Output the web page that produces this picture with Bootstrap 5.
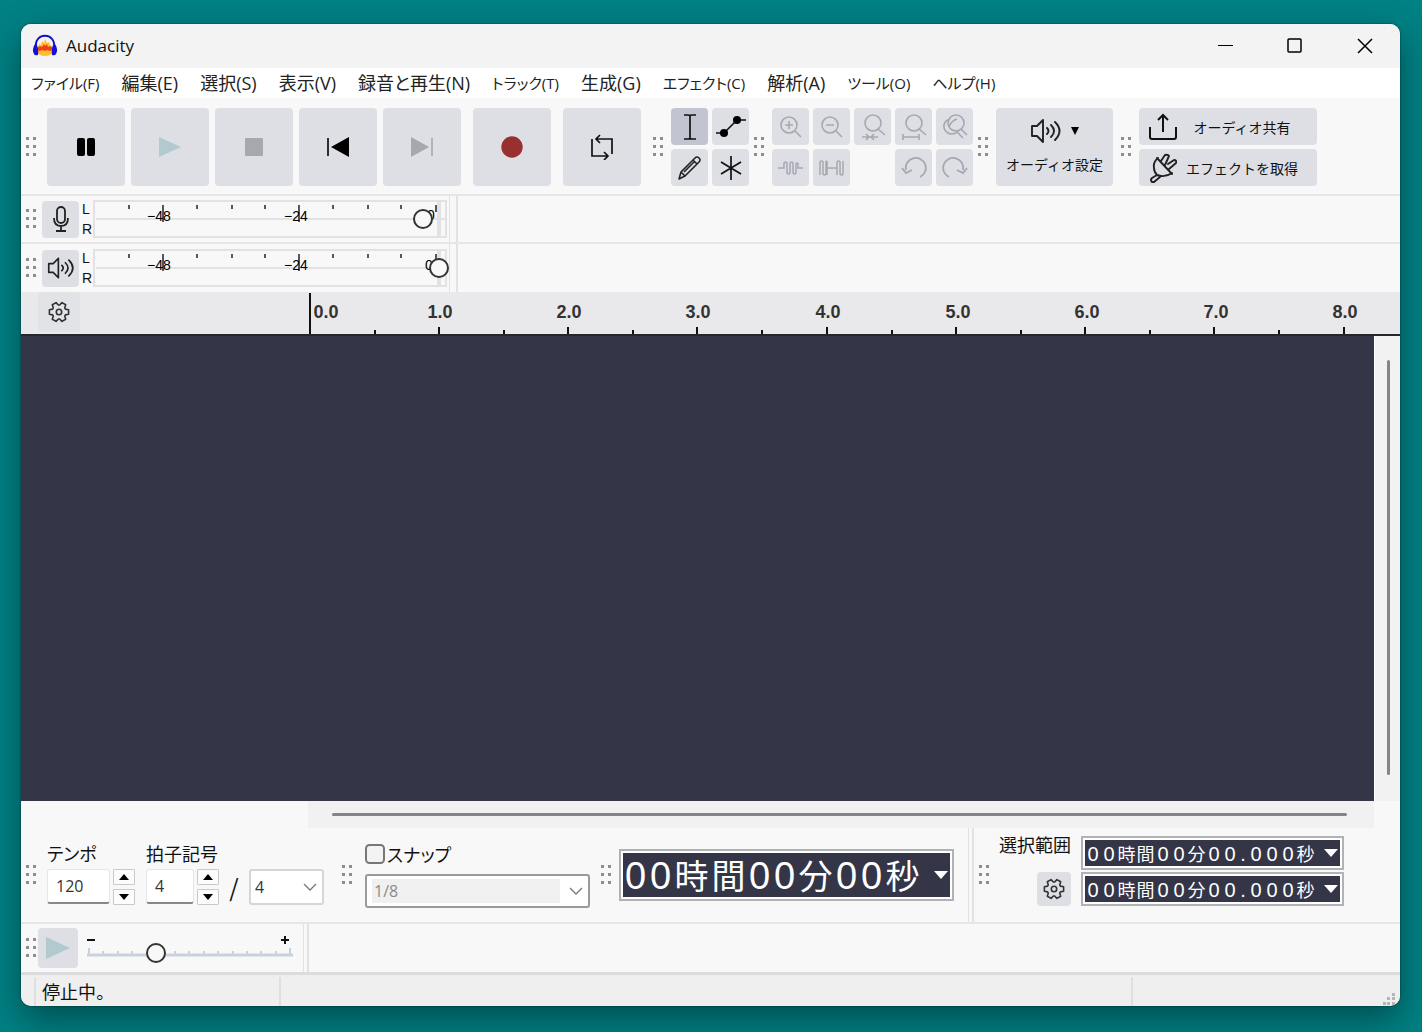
<!DOCTYPE html>
<html lang="ja">
<head>
<meta charset="utf-8">
<meta name="viewport" content="width=device-width, initial-scale=1">
<title>Audacity</title>
<link rel="stylesheet" href="https://cdn.jsdelivr.net/npm/bootstrap@5.3.0/dist/css/bootstrap.min.css">
<script src="https://cdn.jsdelivr.net/npm/bootstrap@5.3.0/dist/js/bootstrap.bundle.min.js"></script>
<style>
  body {
    min-height: 100vh;
    padding: 24px 22px 26px 21px;
    background: #008184;
    color: #111;
    font-family: "Noto Sans CJK JP", sans-serif;
    font-size: 18px;
    line-height: 24px;
    font-feature-settings: "palt";
  }
  svg { display: block; flex-shrink: 0; }
  .app-window { background: #f8f8f8; border-radius: 10px; box-shadow: 0 14px 36px rgba(0, 0, 0, .4), 0 0 2px rgba(0, 0, 0, .6); }
  .title-bar { background: #f3f3f3; min-height: 44px; padding-left: 11px; }
  .title-text { font: 17px/24px "Open Sans", sans-serif; margin-left: 8px; }
  .caption-btn { width: 70px; height: 44px; border: 0; border-radius: 0; padding: 0; }
  .menu-strip { background: #fff; min-height: 30px; padding-left: 10px; gap: 22px; }
  .menu-strip a { color: #222; text-decoration: none; white-space: nowrap; font-family: "Open Sans", "Noto Sans CJK JP", sans-serif; font-size: 18px; }
  .menu-strip a.kana-item { font-size: 15px; }
  .strip { border-bottom: 2px solid #e6e6e8; }
  .main-tools { padding: 10px 0 8px; }
  .grip { margin: 0 6px 0 5px; }
  .tool-btn { background: #dedfe4; border: 0; border-radius: 4px; padding: 0; width: 37px; height: 37px; color: #111; display: flex; align-items: center; justify-content: center; }
  .tool-btn:hover, .tool-btn:disabled { background: #dedfe4; opacity: 1; }
  .tool-btn:disabled { color: #a5a8b2; border: 0; }
  .tool-btn.chosen { background: #c2c5d1; }
  .big-btn { width: 78px; height: 78px; }
  .record-btn { margin: 0 6px; }
  .transport { gap: 6px; padding: 0 7px 0 3px; }
  .tool-grid { display: grid; gap: 4px; grid-template-columns: repeat(2, 37px); }
  .zoom-grid { grid-template-columns: repeat(5, 37px); }
  .setup-btn { width: 117px; height: 78px; flex-direction: column; gap: 8px; font-size: 14px; line-height: 24px; white-space: nowrap; }
  .share-btn { width: 178px; padding: 0 10px; font-size: 14px; line-height: 24px; white-space: nowrap; }
  .dock { border-right: 2px solid #e2e2e5; }
  .dock::after { content: ""; align-self: stretch; width: 1px; background: #e2e2e5; margin-right: 3px; }
  .meter-row { min-height: 48px; }
  .meter-dock { width: 437px; }
  .chan { font: 14px/20px "Liberation Sans", sans-serif; width: 14px; padding-left: 3px; }
  .meter { position: relative; width: 356px; height: 38px; }
  .meter text { font: 14px "Liberation Sans", sans-serif; }
  .knob { -webkit-appearance: none; appearance: none; background: transparent; margin: 0; height: 22px; }
  .knob::-webkit-slider-runnable-track { background: transparent; height: 22px; }
  .knob::-webkit-slider-thumb { -webkit-appearance: none; width: 20px; height: 20px; margin-top: 1px; border: 2px solid #333; border-radius: 50%; background: #f8f8f8; }
  .meter .knob { position: absolute; left: 0; top: 8px; width: 100%; }
  .timeline { background: #e9e9eb; border-bottom: 2px solid #26262f; min-height: 44px; }
  .timeline-gear { width: 42px; height: 40px; margin-left: 17px; background: #e2e3e7; align-self: flex-start; }
  .ruler { margin-left: 229px; height: 42px; overflow: hidden; flex: 1 1 0; min-width: 0; }
  .ruler text { font: bold 18px "Liberation Sans", sans-serif; fill: #333; text-anchor: middle; }
  .track-area { background: #343547; }
  .v-track { width: 26px; background: #f2f2f3; padding: 24px 11px 26px 12px; border-left: 1px solid #fff; }
  .h-track { height: 27px; margin: 0 26px 0 287px; background: #f1f1f2; padding: 12px 27px 0 24px; }
  .scroll-thumb { background: #858585; border-radius: 2px; }
  .v-track .scroll-thumb { height: 100%; width: 3px; }
  .h-track .scroll-thumb { height: 3px; }
  .bottom-strip { min-height: 96px; }
  .tempo-group { gap: 11px; padding: 0 18px 4px 3px; }
  .field-row { display: flex; gap: 3px; }
  .num-box { height: 35px; border: 1px solid #e6e6e6; border-bottom: 2px solid #888; border-radius: 3px; padding: 0 8px; font: 16px/24px "Open Sans", sans-serif; color: #333; background: #fff; width: 63px; }
  .beat-box { width: 48px; }
  .slash { width: 24px; text-align: center; font-size: 24px; line-height: 36px; }
  .spin-btn { width: 22px; height: 16px; background: #fcfcfc; border: 1px solid #c9c9c9; border-radius: 1px; padding: 0; display: flex; align-items: center; justify-content: center; }
  .pick { --bs-form-select-bg-img: url("data:image/svg+xml,%3csvg xmlns='http://www.w3.org/2000/svg' viewBox='0 0 14 14'%3e%3cpath fill='none' stroke='%23777' stroke-width='1.3' d='M1 4l6 6 6-6'/%3e%3c/svg%3e"); width: 75px; height: 36px; border: 2px solid #d6d6d8; border-radius: 3px; padding: 0 24px 0 4px; font: 16px/24px "Open Sans", sans-serif; color: #333; background-color: #fff; background-position: right 5px center; background-size: 14px 14px; }
  .snap-group { padding: 0 6px 0 5px; }
  .snap-pick { width: 225px; height: 34px; border-color: #9a9a9a; padding-left: 7px; }
  .snap-pick:disabled { color: #8b8b8b; background-color: #fff; background-image: var(--bs-form-select-bg-img), linear-gradient(#f0f0f0, #f0f0f0); background-position: right 5px center, 5px center; background-size: 14px 14px, 188px 24px; background-repeat: no-repeat; }
  .snap-check { width: 20px; height: 20px; margin: 0 2px 0 0; border: 2px solid #777; border-radius: 4px; background-color: #f3f3f3; }
  .time-box { background: #343547; border: 2px solid #b0b3b6; outline: 2px solid #fff; outline-offset: -4px; color: #fff; padding: 2px 4px 2px 2px; white-space: nowrap; }
  .time-box span { display: inline-block; text-align: center; }
  .time-box button { background: none; border: 0; padding: 0; }
  .time-big { width: 335px; height: 52px; font-size: 34px; line-height: 48px; font-feature-settings: normal; margin-right: 14px; }
  .time-big .dg { width: 25px; font: 38px/48px "Liberation Sans", sans-serif; }
  .time-big .kj { width: 37px; }
  .time-small { width: 263px; height: 34px; font-size: 18px; line-height: 30px; font-feature-settings: normal; }
  .time-small .dg { width: 16px; font: 20px/30px "Liberation Sans", sans-serif; }
  .time-small .kj { width: 19px; }
  .time-small .pt { width: 10px; font: 20px/30px "Liberation Sans", sans-serif; }
  .range-group { gap: 10px; padding-bottom: 8px; }
  .range-label { line-height: 16px; }
  .range-gear { width: 34px; height: 34px; }
  .range-boxes { row-gap: 2px; }
  .speed-strip { min-height: 48px; border-bottom: 0; }
  .speed-btn { width: 40px; height: 40px; }
  .speed { position: relative; width: 208px; height: 40px; margin: 0 9px 0 8px; }
  .speed .knob { position: absolute; left: 0; top: 14px; width: 100%; }
  .status-strip { background: #efefef; border-top: 3px solid #dcdcde; border-radius: 0 0 10px 10px; }
  .status-cell { border-right: 2px solid #dfdfe0; line-height: 29px; margin-top: 2px; width: 15px; }
  .status-main { width: 245px; padding-left: 6px; }
  .status-end { width: 267px; }
</style>
</head>
<body class="d-flex flex-column">

<svg width="0" height="0" class="position-absolute" aria-hidden="true">
  <symbol id="grip" viewBox="0 0 12 20"><g fill="#8d8d92"><rect width="3" height="3"/><rect x="7" width="3" height="3"/><rect y="8" width="3" height="3"/><rect x="7" y="8" width="3" height="3"/><rect y="16" width="3" height="3"/><rect x="7" y="16" width="3" height="3"/></g></symbol>
  <symbol id="gear" viewBox="-11 -11 22 22"><path d="M6.4 2.9L9.6 2.2V-2.2L6.4-2.9L5.7-4.1L6.7-7.2L2.9-9.4L.7-7H-.7L-2.9-9.4L-6.7-7.2L-5.7-4.1L-6.4-2.9L-9.6-2.2V2.2L-6.4 2.9L-5.7 4.1L-6.7 7.2L-2.9 9.4L-.7 7H.7L2.9 9.4L6.7 7.2L5.7 4.1Z" fill="none" stroke="#333" stroke-width="1.6" stroke-linejoin="round"/><circle r="2.7" fill="none" stroke="#333" stroke-width="1.6"/></symbol>
  <symbol id="speaker" viewBox="0 0 32 26"><g fill="none" stroke="#222" stroke-width="1.9"><path d="M2 8h5l6-6v22l-6-6H2z" stroke-linejoin="round"/><path d="M17 10q3 3 0 6M21 7q6 6 0 12M25 4q9 9 0 18" stroke-linecap="round"/></g></symbol>
  <symbol id="meter-scale" viewBox="0 0 356 38"><g fill="none" stroke="#e2e2e5" stroke-width="2"><path d="M1 1H345V37H1zM347 1H353V37H347zM3 19H344M347 19H353"/></g><g stroke="#222" stroke-width="1.5"><path d="M36 5v4M70 5v17M104 5v4M139 5v4M172 5v4M206 5v17M240 5v4M275 5v4M308 5v4M343 5v7"/></g></symbol>
</svg>

<div class="app-window d-flex flex-column flex-grow-1 overflow-hidden">
  <header class="title-bar d-flex align-items-center">
    <svg width="26" height="24" viewBox="0 0 26 24" aria-hidden="true">
      <path d="M5 17l2-7 2 1 1-4 2 2 1-4 2 4 2-1 1 3 2 1 1 5q-1 5-8 5t-8-5z" fill="#ffc02e"/>
      <path d="M5 14l3-2 2 1 2-3 1 2 2-2 1 3 2-1 3 2v2l-3 1-3-1-2 1-3-1-2 1-3-1z" fill="#f0401a"/>
      <path d="M4 13C2 -2 24 -2 22 13" fill="none" stroke="#1410c8" stroke-width="2"/>
      <path d="M4 9q3 5 2 12q-3 1-4-1q-3-6 2-11zM22 9q-3 5-2 12q3 1 4-1q3-6-2-11z" fill="#1410d8"/>
    </svg>
    <span class="title-text">Audacity</span>
    <div class="d-flex ms-auto">
      <button class="btn caption-btn" aria-label="最小化"><svg class="mx-auto" width="16" height="16"><path d="M1 7.5h15" stroke="#000" stroke-width="1.2"/></svg></button>
      <button class="btn caption-btn" aria-label="最大化"><svg class="mx-auto" width="16" height="16"><rect x="1" y="1" width="13" height="13" rx="1" fill="none" stroke="#000" stroke-width="1.5"/></svg></button>
      <button class="btn caption-btn" aria-label="閉じる"><svg class="mx-auto" width="16" height="16"><path d="M1 1l14 14M15 1L1 15" stroke="#000" stroke-width="1.5"/></svg></button>
    </div>
  </header>

  <nav class="menu-strip d-flex align-items-center">
    <a href="#" class="kana-item">ファイル(F)</a>
    <a href="#">編集(E)</a>
    <a href="#">選択(S)</a>
    <a href="#">表示(V)</a>
    <a href="#">録音と再生(N)</a>
    <a href="#" class="kana-item">トラック(T)</a>
    <a href="#">生成(G)</a>
    <a href="#" class="kana-item">エフェクト(C)</a>
    <a href="#">解析(A)</a>
    <a href="#" class="kana-item">ツール(O)</a>
    <a href="#" class="kana-item">ヘルプ(H)</a>
  </nav>

  <div class="strip main-tools d-flex align-items-center">
    <svg class="grip" width="12" height="20"><use href="#grip"/></svg>
    <div class="transport d-flex">
      <button class="btn tool-btn big-btn" aria-label="一時停止"><svg width="20" height="20"><path d="M3 1h4q2 0 2 2v14q0 2-2 2H3q-2 0-2-2V3q0-2 2-2zM13 1h4q2 0 2 2v14q0 2-2 2h-4q-2 0-2-2V3q0-2 2-2z"/></svg></button>
      <button class="btn tool-btn big-btn" disabled aria-label="再生"><svg width="22" height="20"><path d="M0 0l22 10L0 20z" fill="#b3c9d0"/></svg></button>
      <button class="btn tool-btn big-btn" disabled aria-label="停止"><svg width="18" height="18"><rect width="18" height="18" rx="1" fill="#a6a8ae"/></svg></button>
      <button class="btn tool-btn big-btn" aria-label="先頭へ"><svg width="22" height="20"><path d="M1 1v18" stroke="#000" stroke-width="1.6"/><path d="M22 0v20L4 10z"/></svg></button>
      <button class="btn tool-btn big-btn" disabled aria-label="末尾へ"><svg width="22" height="20"><path d="M21 1v18" stroke="#a6a8ae" stroke-width="1.6"/><path d="M0 0v20l18-10z" fill="#a6a8ae"/></svg></button>
      <button class="btn tool-btn big-btn record-btn" aria-label="録音"><svg width="22" height="22"><circle cx="11" cy="11" r="10.7" fill="#98302f"/></svg></button>
      <button class="btn tool-btn big-btn" aria-label="ループ"><svg width="24" height="26" viewBox="0 0 24 26"><g fill="none" stroke="#111" stroke-width="1.7"><path d="M2 5v17h15M22 20V5H7M10 1L6 5l4 4M14 18l4 4-4 4"/></g></svg></button>
    </div>
    <svg class="grip" width="12" height="20"><use href="#grip"/></svg>
    <div class="tool-grid">
      <button class="btn tool-btn chosen" aria-label="選択ツール"><svg width="14" height="26"><path d="M1 1h4q2 0 2 1q0-1 2-1h4M7 2v22M1 25h4q2 0 2-1q0 1 2 1h4" fill="none" stroke="#111" stroke-width="1.7"/></svg></button>
      <button class="btn tool-btn" aria-label="エンベロープツール"><svg width="30" height="24"><path d="M0 18h8L21 5h9" fill="none" stroke="#111" stroke-width="1.6"/><circle cx="8" cy="18" r="4"/><circle cx="21" cy="5" r="4"/></svg></button>
      <button class="btn tool-btn" aria-label="描画ツール"><svg width="26" height="26"><g fill="none" stroke="#222" stroke-width="1.6" stroke-linejoin="round"><path d="M2 24l2-7L18 3q2-2 4 0t0 4L8 21zM4 17l4 4M16 5l4 4M7 17L17 7"/></g></svg></button>
      <button class="btn tool-btn" aria-label="マルチツール"><svg width="24" height="26"><path d="M12 1v24M2 7l20 12M22 7L2 19" stroke="#111" stroke-width="1.7"/></svg></button>
    </div>
    <svg class="grip" width="12" height="20"><use href="#grip"/></svg>
    <div class="tool-grid zoom-grid">
      <button class="btn tool-btn" disabled aria-label="拡大"><svg width="24" height="24" fill="none" stroke="currentColor" stroke-width="1.6"><circle cx="10" cy="10" r="8"/><path d="M16 16l6 6M6 10h8M10 6v8"/></svg></button>
      <button class="btn tool-btn" disabled aria-label="縮小"><svg width="24" height="24" fill="none" stroke="currentColor" stroke-width="1.6"><circle cx="10" cy="10" r="8"/><path d="M16 16l6 6M6 10h8"/></svg></button>
      <button class="btn tool-btn" disabled aria-label="選択範囲に合わせる"><svg width="26" height="28" fill="none" stroke="currentColor" stroke-width="1.6"><circle cx="13" cy="10" r="8"/><path d="M18 16l7 6M2 24h16M6 21l3 3-3 3M14 21l-3 3 3 3"/></svg></button>
      <button class="btn tool-btn" disabled aria-label="プロジェクトに合わせる"><svg width="26" height="28" fill="none" stroke="currentColor" stroke-width="1.6"><circle cx="13" cy="10" r="8"/><path d="M18 16l7 6M2 24h16M2 21v6M18 21v6"/></svg></button>
      <button class="btn tool-btn" disabled aria-label="ズーム切り替え"><svg width="26" height="28" fill="none" stroke="currentColor" stroke-width="1.6"><circle cx="14" cy="10" r="8"/><path d="M19 16l6 6M8 6q-7 2-6 9q2 6 8 6q3 0 5-2l6 6M7 14q2-6 8-8"/></svg></button>
      <button class="btn tool-btn" disabled aria-label="トリム"><svg width="26" height="20" fill="none" stroke="currentColor" stroke-width="1.5"><path d="M0 10h6V6q0-2 1.500-2T9 6v8q0 2 1.500 2T12 14V6q0-2 1.500-2T15 6v8q0 2 1.500 2T18 14V6q0-1 1-1t1 1v4h5"/></svg></button>
      <button class="btn tool-btn" disabled aria-label="無音化"><svg width="26" height="20" fill="none" stroke="currentColor" stroke-width="1.5"><path d="M1 17V4q0-1 1.500-1T4 4v11q0 2 1.500 2T7 15V4q0-1 1-1M8 3v14M8 10h10M18 17V4q0-1 1.500-1T21 4v11q0 2 1.500 2T24 15V3"/></svg></button>
      <span></span>
      <button class="btn tool-btn" disabled aria-label="元に戻す"><svg width="26" height="24" fill="none" stroke="currentColor" stroke-width="1.8"><path d="M5 14a10 10 0 1 1 14 7M1 12l4 5 6-3"/></svg></button>
      <button class="btn tool-btn" disabled aria-label="やり直す"><svg width="26" height="24" fill="none" stroke="currentColor" stroke-width="1.8"><path d="M21 14a10 10 0 1 0-14 7M25 12l-4 5-6-3"/></svg></button>
    </div>
    <svg class="grip" width="12" height="20"><use href="#grip"/></svg>
    <button class="btn tool-btn setup-btn">
      <span class="d-flex align-items-center gap-2"><svg width="32" height="26"><use href="#speaker"/></svg><svg width="10" height="8"><path d="M1 0h8L5 8z"/></svg></span>
      <span>オーディオ設定</span>
    </button>
    <svg class="grip ms-2" width="12" height="20"><use href="#grip"/></svg>
    <div class="d-grid gap-1">
      <button class="btn tool-btn share-btn"><svg width="28" height="28"><path d="M1 14v10q0 2 2 2h22q2 0 2-2V14M14 19V3M9 7l5-5 5 5" fill="none" stroke="#111" stroke-width="2"/></svg><span class="flex-grow-1">オーディオ共有</span></button>
      <button class="btn tool-btn share-btn"><svg width="28" height="30"><path d="M9 5q-5 4-4 10q0 4 3 7M8 5l15 16M23 20q-7 5-15 2l-5 3q-2 2 0 4l2 0 6-5M12 8l4-6q3-1 4 1l-4 9M20 16l7-6q1-3-2-3l-6 4" fill="none" stroke="#222" stroke-width="1.9" stroke-linejoin="round" stroke-linecap="round"/></svg><span class="flex-grow-1">エフェクトを取得</span></button>
    </div>
  </div>

  <div class="strip meter-row d-flex align-items-stretch">
    <div class="dock meter-dock d-flex align-items-center">
      <svg class="grip me-0" width="12" height="20"><use href="#grip"/></svg>
      <button class="btn tool-btn ms-1" aria-label="録音メーター"><svg width="18" height="26"><g fill="none" stroke="#222" stroke-width="1.8"><rect x="5" y="1" width="8" height="16" rx="4"/><path d="M2 12q0 8 7 8t7-8M9 20v5M4 25h10"/></g></svg></button>
      <div class="chan">L<br>R</div>
      <div class="meter">
        <svg width="356" height="38"><use href="#meter-scale"/><text x="54" y="21">−48</text><text x="191" y="21">−24</text><text x="334" y="20">0</text></svg>
        <input type="range" class="knob" min="0" max="336" value="320" aria-label="録音音量">
      </div>
    </div>
  </div>
  <div class="meter-row d-flex align-items-stretch">
    <div class="dock meter-dock d-flex align-items-center">
      <svg class="grip me-0" width="12" height="20"><use href="#grip"/></svg>
      <button class="btn tool-btn ms-1" aria-label="再生メーター"><svg width="28" height="24"><use href="#speaker"/></svg></button>
      <div class="chan">L<br>R</div>
      <div class="meter">
        <svg width="356" height="38"><use href="#meter-scale"/><text x="54" y="21">−48</text><text x="191" y="21">−24</text><text x="332" y="21">0</text></svg>
        <input type="range" class="knob" min="0" max="336" value="336" aria-label="再生音量">
      </div>
    </div>
  </div>

  <div class="timeline d-flex">
    <button class="btn tool-btn timeline-gear" aria-label="タイムライン設定"><svg width="22" height="22"><use href="#gear"/></svg></button>
    <svg class="ruler" height="42">
      <path d="M1 1v41M130 35v7M259 35v7M388 35v7M518 35v7M647 35v7M776 35v7M905 35v7M1035 35v7M66 38v4M195 38v4M324 38v4M453 38v4M583 38v4M712 38v4M841 38v4M970 38v4" stroke="#111" stroke-width="2"/>
      <text x="17" y="26">0.0</text><text x="131" y="26">1.0</text><text x="260" y="26">2.0</text><text x="389" y="26">3.0</text><text x="519" y="26">4.0</text><text x="649" y="26">5.0</text><text x="778" y="26">6.0</text><text x="907" y="26">7.0</text><text x="1036" y="26">8.0</text>
    </svg>
  </div>

  <main class="d-flex flex-grow-1">
    <div class="track-area flex-grow-1"></div>
    <div class="v-track"><div class="scroll-thumb"></div></div>
  </main>
  <div class="h-track"><div class="scroll-thumb"></div></div>

  <div class="strip bottom-strip d-flex align-items-stretch">
    <div class="d-flex align-items-center">
      <svg class="grip" width="12" height="20"><use href="#grip"/></svg>
      <div class="tempo-group d-flex align-items-end">
        <div>
          <label for="tempo" class="d-block mb-1">テンポ</label>
          <div class="field-row">
            <input id="tempo" class="num-box" type="text" value="120">
            <div class="d-flex flex-column gap-1">
              <button class="spin-btn" aria-label="増やす"><svg width="10" height="6"><path d="M0 6l5-6 5 6z"/></svg></button>
              <button class="spin-btn" aria-label="減らす"><svg width="10" height="6"><path d="M0 0l5 6 5-6z"/></svg></button>
            </div>
          </div>
        </div>
        <div>
          <label for="beats" class="d-block mb-1">拍子記号</label>
          <div class="field-row">
            <input id="beats" class="num-box beat-box" type="text" value="4">
            <div class="d-flex flex-column gap-1">
              <button class="spin-btn" aria-label="増やす"><svg width="10" height="6"><path d="M0 6l5-6 5 6z"/></svg></button>
              <button class="spin-btn" aria-label="減らす"><svg width="10" height="6"><path d="M0 0l5 6 5-6z"/></svg></button>
            </div>
            <span class="slash">/</span>
            <select class="form-select pick" aria-label="音符"><option>4</option></select>
          </div>
        </div>
      </div>
      <svg class="grip ms-0" width="12" height="20"><use href="#grip"/></svg>
      <div class="snap-group">
        <div class="d-flex align-items-center mb-2"><input id="snap" type="checkbox" class="form-check-input snap-check"><label for="snap">スナップ</label></div>
        <select class="form-select pick snap-pick" disabled aria-label="スナップ単位"><option>1/8</option></select>
      </div>
      <svg class="grip" width="12" height="20"><use href="#grip"/></svg>
    </div>
    <div class="dock d-flex align-items-center">
      <div class="time-box time-big d-flex align-items-center">
        <div><span class="dg">0</span><span class="dg">0</span><span class="kj">時</span><span class="kj">間</span><span class="dg">0</span><span class="dg">0</span><span class="kj">分</span><span class="dg">0</span><span class="dg">0</span><span class="kj">秒</span></div>
        <button class="ms-auto" aria-label="表示形式"><svg width="14" height="8"><path d="M0 0h14L7 8z" fill="#fff"/></svg></button>
      </div>
    </div>
    <div class="d-flex align-items-center">
      <svg class="grip me-2" width="12" height="20"><use href="#grip"/></svg>
      <div class="range-group d-flex">
        <div class="d-flex flex-column align-items-end justify-content-between">
          <span class="range-label">選択範囲</span>
          <button class="btn tool-btn range-gear" aria-label="選択設定"><svg width="22" height="22"><use href="#gear"/></svg></button>
        </div>
        <div class="range-boxes d-grid">
          <div class="time-box time-small d-flex align-items-center">
            <div><span class="dg">0</span><span class="dg">0</span><span class="kj">時</span><span class="kj">間</span><span class="dg">0</span><span class="dg">0</span><span class="kj">分</span><span class="dg">0</span><span class="dg">0</span><span class="pt">.</span><span class="dg">0</span><span class="dg">0</span><span class="dg">0</span><span class="kj">秒</span></div>
            <button class="ms-auto" aria-label="開始の形式"><svg width="14" height="8"><path d="M0 0h14L7 8z" fill="#fff"/></svg></button>
          </div>
          <div class="time-box time-small d-flex align-items-center">
            <div><span class="dg">0</span><span class="dg">0</span><span class="kj">時</span><span class="kj">間</span><span class="dg">0</span><span class="dg">0</span><span class="kj">分</span><span class="dg">0</span><span class="dg">0</span><span class="pt">.</span><span class="dg">0</span><span class="dg">0</span><span class="dg">0</span><span class="kj">秒</span></div>
            <button class="ms-auto" aria-label="終了の形式"><svg width="14" height="8"><path d="M0 0h14L7 8z" fill="#fff"/></svg></button>
          </div>
        </div>
      </div>
    </div>
  </div>

  <div class="strip speed-strip d-flex align-items-stretch">
    <div class="dock d-flex align-items-center">
      <svg class="grip me-0" width="12" height="20"><use href="#grip"/></svg>
      <button class="btn tool-btn speed-btn" disabled aria-label="指定速度で再生"><svg width="24" height="22"><path d="M0 0l24 11L0 22z" fill="#b3c9d0"/></svg></button>
      <div class="speed">
        <svg width="208" height="40"><path d="M1 27h206" stroke="#c9d0de" stroke-width="3"/><path d="M3 20v7M17 23v4M32 23v4M46 23v4M89 23v4M103 23v4M118 23v4M132 23v4M147 23v4M161 23v4M175 23v4M190 23v4M204 20v7" stroke="#c9d0de" stroke-width="2"/><path d="M1 12h8M195 12h8M199 8v8" stroke="#111" stroke-width="2"/></svg>
        <input type="range" class="knob" min="0" max="188" value="60" aria-label="再生速度">
      </div>
    </div>
  </div>

  <footer class="status-strip d-flex">
    <div class="status-cell"></div>
    <div class="status-cell status-main">停止中。</div>
    <div class="status-cell flex-grow-1"></div>
    <div class="status-end d-flex justify-content-end align-items-end pe-1"><svg width="14" height="14" fill="#b5b5b5"><path d="M10 1h3v3h-3zM10 5h3v3h-3zM10 10h3v3h-3zM5 5h3v3H5zM5 10h3v3H5zM1 10h3v3H1z"/></svg></div>
  </footer>
</div>
</body>
</html>
